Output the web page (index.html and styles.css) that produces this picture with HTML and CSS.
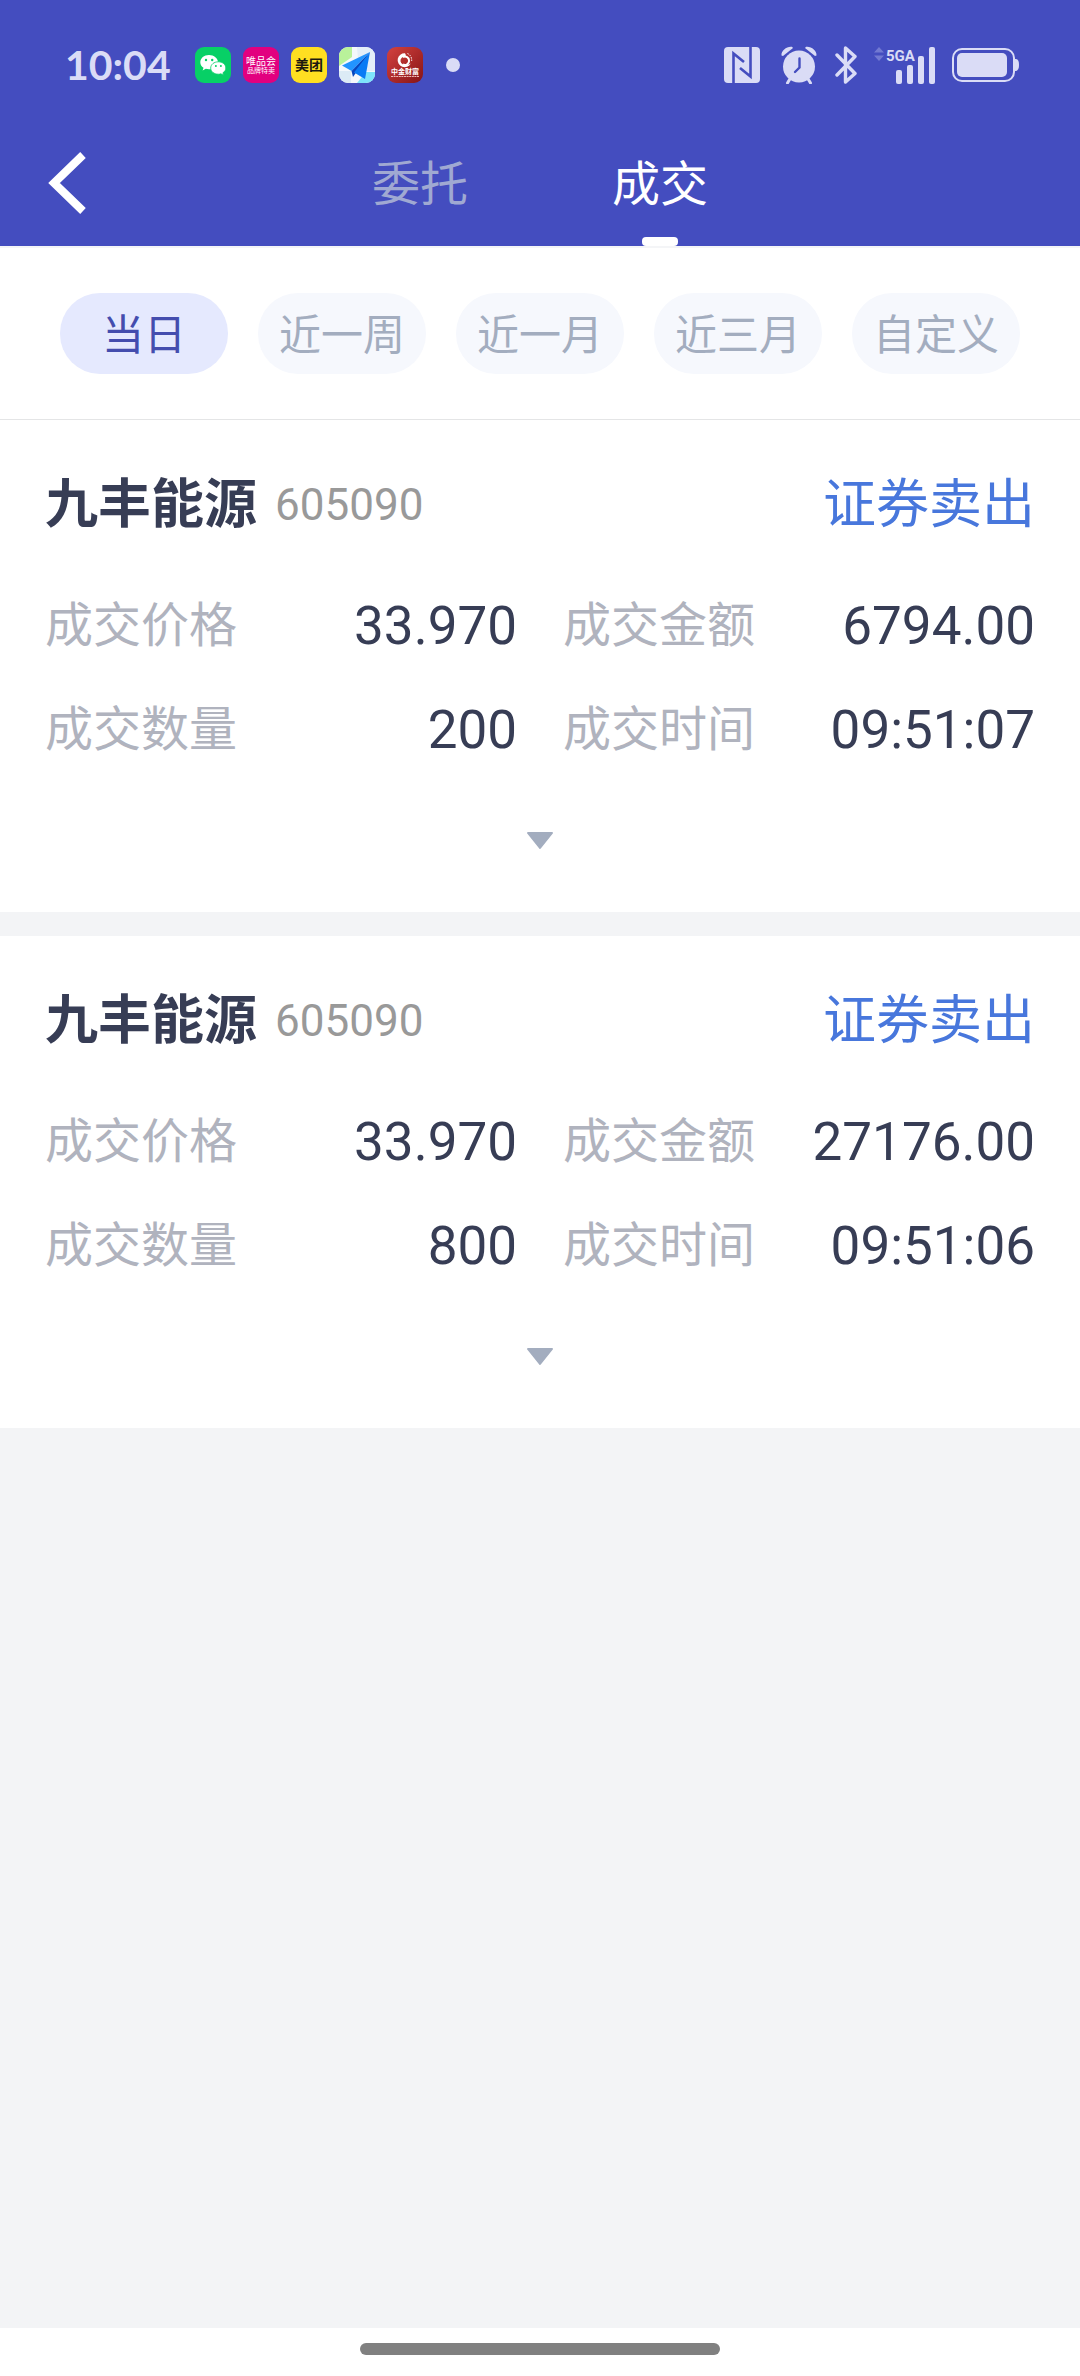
FILE: index.html
```html
<!DOCTYPE html>
<html lang="zh-CN">
<head>
<meta charset="utf-8">
<meta name="viewport" content="width=device-width, initial-scale=1">
<title>成交</title>
<link rel="stylesheet" href="styles.css">
</head>
<body>
<header class="top">
  <div class="status">
    <div class="status-left">
      <time class="clock">10:04</time>
      <svg class="app" viewBox="0 0 36 36" aria-hidden="true">
        <rect width="36" height="36" rx="9" fill="#07d066"/>
        <path d="M14 8C9 8 5.300 11.200 5.300 15.200c0 2.300 1.200 4.200 3.200 5.500l-.9 2.700 3.200-1.600c1 .3 2.100.5 3.200.5 5 0 9-3.200 9-7.100S19 8 14 8z" fill="#fff"/>
        <path d="M23.300 14.800c-4.300 0-7.600 2.700-7.600 6.200s3.300 6.200 7.600 6.200c1 0 1.800-.1 2.600-.4l2.700 1.400-.7-2.400c1.800-1.100 2.900-2.800 2.900-4.800 0-3.500-3.300-6.200-7.500-6.200z" fill="#fff" stroke="#07d066" stroke-width=".8"/>
        <g fill="#07d066"><circle cx="11" cy="13" r="1.200"/><circle cx="17.200" cy="13" r="1.200"/><circle cx="20.900" cy="19" r="1"/><circle cx="25.900" cy="19" r="1"/></g>
      </svg>
      <svg class="app" viewBox="0 0 36 36" aria-hidden="true">
        <rect width="36" height="36" rx="9" fill="#e2007f"/>
        <text class="mini mini-regular" x="18" y="18" font-size="10">唯品会</text>
        <text class="mini mini-regular" x="18" y="26" font-size="7">品牌特卖</text>
      </svg>
      <svg class="app" viewBox="0 0 36 36" aria-hidden="true">
        <rect width="36" height="36" rx="9" fill="#ffdf21"/>
        <text class="mini mini-dark" x="18" y="23" font-size="14">美团</text>
      </svg>
      <svg class="app" viewBox="0 0 36 36" aria-hidden="true">
        <clipPath id="map-clip"><rect width="36" height="36" rx="9"/></clipPath>
        <g clip-path="url(#map-clip)">
          <rect width="36" height="36" fill="#f4f8fb"/>
          <path d="M0 0h13v10L0 19z" fill="#b9f29a"/>
          <path d="M18 0h18v24H20z" fill="#e4eef8"/>
          <path d="M0 24h12v12H0z" fill="#dcebf5"/>
          <path d="M27 25h9v11H18z" fill="#7de3fb"/>
          <path d="M31 5 3 18.500l9.500 5.500z" fill="#2294ff"/>
          <path d="M31 5 12.500 24l1.500 6z" fill="#0646bd"/>
          <path d="M31 5 15 25.500 26 32z" fill="#087bf5"/>
        </g>
      </svg>
      <svg class="app" viewBox="0 0 36 36" aria-hidden="true">
        <defs><linearGradient id="wealth" x1="0" y1="0" x2="1" y2="1"><stop offset="0" stop-color="#d4423f"/><stop offset="1" stop-color="#861416"/></linearGradient></defs>
        <rect width="36" height="36" rx="9" fill="url(#wealth)"/>
        <path d="M18 6.200a7 7 0 1 0 5.800 10.300c-1.500 1.200-3 1.200-4.300.7a4 4 0 1 1-1-7.300 3.500 3.500 0 0 0-.5-3.700z" fill="#fff"/>
        <path d="M20.500 6.500a7 7 0 0 1 4 8" fill="none" stroke="#fff" stroke-width="1" stroke-dasharray="1.500 1"/>
        <path d="M16 10a4.200 4.200 0 1 1 0 7.500" fill="none" stroke="#fff" stroke-width="2"/>
        <text class="mini" x="18" y="27" font-size="7">中金财富</text>
        <path d="M4 29.500h28" stroke="#efb9b5" stroke-width="1" stroke-dasharray="2 .6"/>
      </svg>
      <span class="more-dot"></span>
    </div>
    <div class="status-right">
      <svg class="nfc" viewBox="0 0 36 36" role="img" aria-label="NFC">
        <rect width="36" height="36" rx="4" fill="#dadcf6"/>
        <path d="M9.500 36V6.500L20 15M26.500 0v29.500L16 21" fill="none" stroke="#444dbf" stroke-width="2.600"/>
      </svg>
      <svg class="alarm" viewBox="0 0 36 38" role="img" aria-label="闹钟">
        <g fill="#dadcf6"><circle cx="18" cy="20.500" r="16"/><path d="M.5 9.500C0 4.500 6 0 11 .8L12 2 2 10zM35.500 9.500C36 4.500 30 0 25 .8L24 2l10 8z"/></g>
        <path d="m9.500 32-3 5M26.500 32l3 5" stroke="#dadcf6" stroke-width="3" stroke-linecap="round"/>
        <path d="M18.500 12.500v9L14 26" fill="none" stroke="#444dbf" stroke-width="2.400" stroke-linecap="round"/>
      </svg>
      <svg class="bluetooth" viewBox="0 0 24 38" role="img" aria-label="蓝牙">
        <path d="m3 9 18 18.500L11.500 36V2L21 10.500 3 29" fill="none" stroke="#dadcf6" stroke-width="3.400" stroke-linecap="round" stroke-linejoin="round"/>
      </svg>
      <svg class="signal" viewBox="0 0 62 38" role="img" aria-label="5GA 信号">
        <path d="m0 6.500 5-5.500 5 5.500zM0 9.500h10L5 15z" fill="#7279d2"/>
        <g fill="#dadcf6">
          <text class="network" x="12" y="15">5GA</text>
          <rect x="22" y="24" width="6" height="14" rx="2"/><rect x="33" y="19" width="6" height="19" rx="2"/><rect x="44" y="10" width="6" height="28" rx="2"/><rect x="55" y="1" width="6" height="37" rx="2"/>
        </g>
      </svg>
      <svg class="battery" viewBox="0 0 68 34" role="img" aria-label="电量">
        <rect x="1" y="1" width="61" height="32" rx="9" fill="none" stroke="#dadcf6" stroke-width="2"/>
        <rect x="5" y="5" width="50" height="24" rx="5" fill="#dadcf6"/>
        <path d="M63 11c3 0 4 2 4 6s-1 6-4 6z" fill="#dadcf6"/>
      </svg>
    </div>
  </div>
  <nav class="nav">
    <button class="back" type="button" aria-label="返回">
      <svg viewBox="0 0 38 62" aria-hidden="true"><path d="M35 3 6 31l29 28" fill="none" stroke="#fff" stroke-width="8"/></svg>
    </button>
    <div class="tabs" role="tablist">
      <button class="tab" type="button" role="tab" aria-selected="false">委托</button>
      <button class="tab tab-active" type="button" role="tab" aria-selected="true">成交</button>
    </div>
  </nav>
</header>

<div class="filters">
  <button class="chip chip-active" type="button" aria-pressed="true">当日</button>
  <button class="chip" type="button">近一周</button>
  <button class="chip" type="button">近一月</button>
  <button class="chip" type="button">近三月</button>
  <button class="chip" type="button">自定义</button>
</div>

<main class="deals">
  <article class="deal">
    <header class="deal-head">
      <h2 class="name">九丰能源</h2>
      <span class="code">605090</span>
      <span class="side">证券卖出</span>
    </header>
    <dl class="facts">
      <div class="fact"><dt>成交价格</dt><dd>33.970</dd></div>
      <div class="fact"><dt>成交金额</dt><dd>6794.00</dd></div>
      <div class="fact"><dt>成交数量</dt><dd>200</dd></div>
      <div class="fact"><dt>成交时间</dt><dd>09:51:07</dd></div>
    </dl>
    <button class="expand" type="button" aria-label="展开">
      <svg viewBox="0 0 28 18" aria-hidden="true"><path d="M2 1h24L14 16z" fill="#a3adbf" stroke="#a3adbf" stroke-width="2" stroke-linejoin="round"/></svg>
    </button>
  </article>
  <article class="deal">
    <header class="deal-head">
      <h2 class="name">九丰能源</h2>
      <span class="code">605090</span>
      <span class="side">证券卖出</span>
    </header>
    <dl class="facts">
      <div class="fact"><dt>成交价格</dt><dd>33.970</dd></div>
      <div class="fact"><dt>成交金额</dt><dd>27176.00</dd></div>
      <div class="fact"><dt>成交数量</dt><dd>800</dd></div>
      <div class="fact"><dt>成交时间</dt><dd>09:51:06</dd></div>
    </dl>
    <button class="expand" type="button" aria-label="展开">
      <svg viewBox="0 0 28 18" aria-hidden="true"><path d="M2 1h24L14 16z" fill="#a3adbf" stroke="#a3adbf" stroke-width="2" stroke-linejoin="round"/></svg>
    </button>
  </article>
</main>

<footer class="home"><div class="home-bar"></div></footer>
</body>
</html>
```
FILE: styles.css
```css
* { box-sizing: border-box; }
body {
  margin: 0;
  min-height: 100vh;
  display: flex;
  flex-direction: column;
  background: #f3f4f6;
  color: #373d55;
  font-family: Roboto, "Noto Sans CJK SC", sans-serif;
}
button {
  margin: 0;
  padding: 0;
  border: 0;
  background: none;
  color: inherit;
  font: inherit;
}
svg { display: block; flex: none; }

.top { background: #444dbf; }
.status {
  height: 120px;
  padding: 10px 60px 0 65px;
  display: flex;
  align-items: center;
  justify-content: space-between;
}
.status-left { display: flex; align-items: center; gap: 12px; }
.clock {
  width: 118px;
  color: #dadcf6;
  font: 700 41px/48px Lato, sans-serif;
}
.app { width: 36px; height: 36px; }
.mini {
  fill: #fff;
  font-family: "Noto Sans CJK SC", sans-serif;
  font-weight: 700;
  text-anchor: middle;
}
.mini-regular { font-weight: 400; }
.mini-dark { fill: #1c1a10; }
.more-dot {
  width: 14px;
  height: 14px;
  margin-left: 11px;
  border-radius: 7px;
  background: #dadcf6;
}
.status-right { display: flex; align-items: center; gap: 16px; }
.nfc { width: 36px; height: 36px; margin-right: 4px; }
.alarm { width: 38px; height: 38px; }
.bluetooth { width: 24px; height: 38px; }
.signal { width: 62px; height: 38px; }
.battery { width: 68px; height: 34px; }
.network {
  font-family: Roboto, sans-serif;
  font-size: 15px;
  font-weight: 700;
}

.nav {
  height: 126px;
  padding: 0 48px;
  display: grid;
  grid-template-columns: 1fr auto 1fr;
}
.back { justify-self: start; display: flex; align-items: center; }
.back svg { width: 38px; height: 62px; }
.tabs { display: flex; }
.tab {
  width: 240px;
  padding-top: 13px;
  display: flex;
  flex-direction: column;
  align-items: center;
  justify-content: space-between;
  color: #a0a9d2;
  font-size: 48px;
  line-height: 104px;
}
.tab-active { color: #fff; }
.tab-active::after {
  content: "";
  width: 36px;
  height: 9px;
  border-radius: 4px;
  background: #fff;
}

.filters {
  padding: 45px 60px;
  display: grid;
  grid-template-columns: repeat(5, 1fr);
  gap: 30px;
  border-top: 2px solid #f4f5f7;
  border-bottom: 1px solid #e4e5e6;
  background: #fff;
}
.chip {
  height: 81px;
  padding-top: 5px;
  border-radius: 40px;
  background: #f6f8fd;
  color: #a3adbf;
  font-size: 42px;
  line-height: 60px;
}
.chip-active { background: #e5e9fe; color: #444dae; }

.deals { flex: 1; display: flex; flex-direction: column; gap: 24px; }
.deal { padding: 49px 45px 12px; background: #fff; }
.deal-head { display: flex; align-items: center; line-height: 72px; }
.name { margin: 0; font-size: 53px; font-weight: 700; }
.code { margin-left: 18px; color: #999; font-size: 44px; }
.side { margin-left: auto; color: #4877dc; font-size: 53px; }
.facts {
  margin: 33px 0 0;
  display: grid;
  grid-template-columns: 1fr 1fr;
  column-gap: 46px;
}
.fact {
  display: flex;
  align-items: center;
  justify-content: space-between;
  line-height: 104px;
}
.fact dt { color: #b0b3be; font-size: 48px; }
.fact dd { margin: 0; font-size: 53px; }
.expand {
  width: 100%;
  height: 118px;
  display: flex;
  align-items: center;
  justify-content: center;
}
.expand svg { width: 28px; height: 18px; }

.home {
  height: 48px;
  display: flex;
  justify-content: center;
  padding-top: 15px;
  background: #fff;
}
.home-bar { width: 33.3333%; height: 12px; border-radius: 6px; background: #808080; }
```
